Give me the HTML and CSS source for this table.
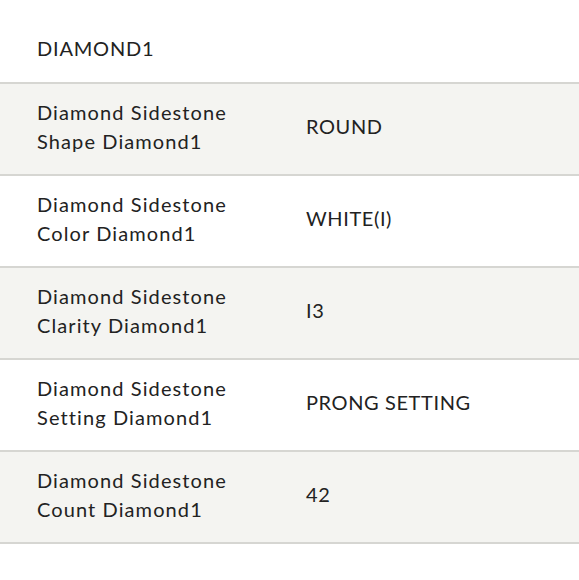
FILE: index.html
```html
<!DOCTYPE html>
<html>
<head>
<meta charset="utf-8">
<link rel="stylesheet" href="styles.css">
</head>
<body>
<div class="spec">
  <div class="spec-title">DIAMOND1</div>
  <div class="spec-row alt">
    <div class="label">Diamond Sidestone<br>Shape Diamond1</div>
    <div class="value">ROUND</div>
  </div>
  <div class="spec-row">
    <div class="label">Diamond Sidestone<br>Color Diamond1</div>
    <div class="value">WHITE(I)</div>
  </div>
  <div class="spec-row alt">
    <div class="label">Diamond Sidestone<br>Clarity Diamond1</div>
    <div class="value">I3</div>
  </div>
  <div class="spec-row">
    <div class="label">Diamond Sidestone<br>Setting Diamond1</div>
    <div class="value">PRONG SETTING</div>
  </div>
  <div class="spec-row alt">
    <div class="label">Diamond Sidestone<br>Count Diamond1</div>
    <div class="value">42</div>
  </div>
</div>
</body>
</html>
```

FILE: styles.css
```css
html, body {
  margin: 0;
  padding: 0;
  background: #ffffff;
}
body {
  font-family: Lato, "Noto Sans", sans-serif;
  color: #222222;
  font-size: 20px;
}
.spec {
  display: flex;
  flex-direction: column;
}
.spec-title {
  height: 84px;
  box-sizing: border-box;
  padding: 34px 0 0 37px;
  line-height: 29px;
  letter-spacing: 0.8px;
  border-bottom: 2px solid #d6d6d2;
}
.spec-row {
  display: grid;
  grid-template-columns: 269px 1fr;
  align-items: center;
  height: 92px;
  box-sizing: border-box;
  padding: 0 0 5px 37px;
  border-bottom: 2px solid #d6d6d2;
  line-height: 29px;
}
.spec-row.alt {
  background: #f4f4f1;
}
.label {
  letter-spacing: 1.1px;
}
.value {
  letter-spacing: 0.6px;
}
```
